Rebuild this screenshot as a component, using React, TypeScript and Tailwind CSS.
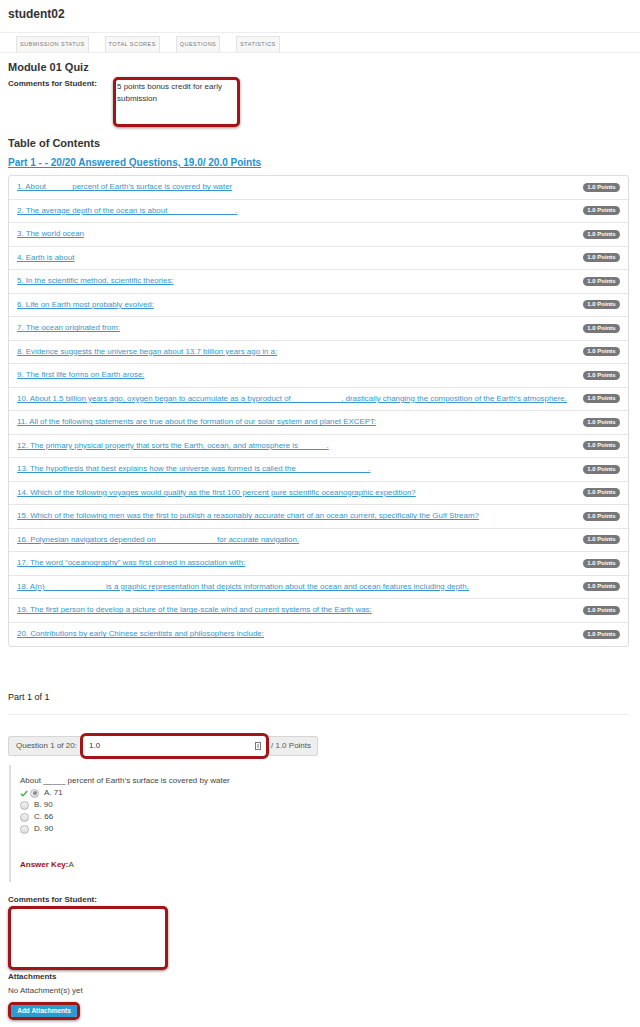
import React from 'react';

const QUESTIONS = [
  '1. About _____ percent of Earth\u2019s surface is covered by water',
  '2. The average depth of the ocean is about _______________.',
  '3. The world ocean',
  '4. Earth is about',
  '5. In the scientific method, scientific theories:',
  '6. Life on Earth most probably evolved:',
  '7. The ocean originated from:',
  '8. Evidence suggests the universe began about 13.7 billion years ago in a:',
  '9. The first life forms on Earth arose:',
  '10. About 1.5 billion years ago, oxygen began to accumulate as a byproduct of ___________, drastically changing the composition of the Earth\u2019s atmosphere.',
  '11. All of the following statements are true about the formation of our solar system and planet EXCEPT:',
  '12. The primary physical property that sorts the Earth, ocean, and atmosphere is ______.',
  '13. The hypothesis that best explains how the universe was formed is called the ________________.',
  '14. Which of the following voyages would qualify as the first 100 percent pure scientific oceanographic expedition?',
  '15. Which of the following men was the first to publish a reasonably accurate chart of an ocean current, specifically the Gulf Stream?',
  '16. Polynesian navigators depended on _____________ for accurate navigation.',
  '17. The word \u201coceanography\u201d was first coined in association with:',
  '18. A(n) _____________ is a graphic representation that depicts information about the ocean and ocean features including depth.',
  '19. The first person to develop a picture of the large-scale wind and current systems of the Earth was:',
  '20. Contributions by early Chinese scientists and philosophers include:',
];

const TABS = ['Submission Status', 'Total Scores', 'Questions', 'Statistics'];

const OPTIONS = ['A. 71', 'B. 90', 'C. 66', 'D. 90'];

function Radio({ checked }: { checked?: boolean }) {
  return (
    <span className="flex h-[9px] w-[9px] items-center justify-center rounded-full border border-[#b5b5b5] bg-gradient-to-b from-[#f4f4f4] to-[#dcdcdc]">
      {checked && <span className="h-[4px] w-[4px] rounded-full bg-[#8a8a8a]" />}
    </span>
  );
}

export default function App() {
  return (
    <div className="w-[640px] bg-white pb-[9px] font-['Liberation_Sans',Arial,sans-serif] text-[#333]">
      {/* header */}
      <div className="h-[32px] pl-2 pt-[6px] text-[12px] font-bold leading-[16px] text-[#333]">student02</div>

      <div className="flex gap-4 border-y border-[#eeeeee] pl-4 pt-[3px]">
        {TABS.map((tab) => (
          <div
            key={tab}
            className="flex h-[16px] items-center border border-b-0 border-[#e3e3e3] bg-[#f7f7f7] px-[3px] text-[5.5px] uppercase tracking-[0.45px] text-[#777]"
          >
            {tab}
          </div>
        ))}
      </div>

      <div className="w-[629px] pl-2">
        <div className="mt-[7px] text-[11px] font-bold leading-[14px]">Module 01 Quiz</div>

        <div className="mt-[3px] flex">
          <div className="w-[105px] pt-[2px] text-[8px] font-bold leading-[10px]">Comments for Student:</div>
          <div className="h-[50px] w-[127px] rounded-[5px] border-[3px] border-[#a31419] bg-white px-[1px] pt-[1px] text-[8px] leading-[12px] text-[#333] shadow-[0_1px_3px_rgba(0,0,0,0.45)]">
            5 points bonus credit for early submission
          </div>
        </div>

        <div className="mt-[9px] text-[11px] font-bold leading-[14px]">Table of Contents</div>
        <div className="mt-[7px] text-[10px] font-bold leading-[12px] text-[#1c94d2] underline">
          Part 1 - - 20/20 Answered Questions, 19.0/ 20.0 Points
        </div>

        <div className="mt-[6px] rounded-[3px] border border-[#dddddd]">
          {QUESTIONS.map((q, i) => (
            <div
              key={q}
              className={`flex h-[23.5px] items-center justify-between pl-[8px] pr-[8px] ${
                i < QUESTIONS.length - 1 ? 'border-b border-[#e6e6e6]' : ''
              }`}
            >
              <span className="text-[7.9px] leading-[10px] text-[#3597cb] underline">{q}</span>
              <span className="flex h-[9px] w-[37px] shrink-0 items-center justify-center rounded-full bg-[#777] text-[6px] font-bold text-white">
                1.0 Points
              </span>
            </div>
          ))}
        </div>

        <div className="mt-[44px] text-[9px] leading-[12px] text-[#222]">Part 1 of 1</div>
        <div className="mt-[11px] border-t border-[#eeeeee]" />

        {/* score bar */}
        <div className="mt-[21px] flex h-[20px] text-[8px] text-[#555]">
          <div className="flex w-[75px] items-center rounded-l-[3px] border border-r-0 border-[#d6d6d6] bg-[#eeeeee] pl-[7px]">
            Question 1 of 20:
          </div>
          <div className="relative flex w-[183px] items-center justify-between rounded-[3px] bg-white pl-[6px] pr-[5px] text-[#333] shadow-[0_1px_3px_rgba(0,0,0,0.45)] outline outline-[3px] outline-[#a31419]">
            <span>1.0</span>
            <svg width="6" height="8" viewBox="0 0 6 8">
              <rect x="0.5" y="0.5" width="5" height="7" fill="none" stroke="#777" />
              <line x1="3" y1="2" x2="3" y2="6" stroke="#777" />
            </svg>
          </div>
          <div className="flex w-[52px] items-center rounded-r-[3px] border border-l-0 border-[#d6d6d6] bg-[#eeeeee] pl-[5px]">
            / 1.0 Points
          </div>
        </div>

        {/* question */}
        <div className="mt-[9px] ml-[1px] border-l-2 border-[#dddddd] pb-[11px] pl-[9px] pt-[10px] text-[8px] leading-[12px] text-[#444]">
          <div>About _____ percent of Earth&rsquo;s surface is covered by water</div>
          {OPTIONS.map((o, i) => (
            <div key={o} className="flex items-center">
              {i === 0 && (
                <svg width="8" height="7" viewBox="0 0 8 7" className="mr-[2px]">
                  <path d="M0.8 3.8 L3 5.8 L7.2 1" fill="none" stroke="#3cb34a" strokeWidth="1.4" />
                </svg>
              )}
              <Radio checked={i === 0} />
              <span className="ml-[5px]">{o}</span>
            </div>
          ))}
          <div className="mt-[24px]">
            <span className="font-bold text-[#a00f0f]">Answer Key:</span>A
          </div>
        </div>

        <div className="mt-[13px] text-[8px] font-bold leading-[10px]">Comments for Student:</div>
        <div className="mt-[1px] h-[64px] w-[160px] rounded-[5px] border-[3px] border-[#a31419] bg-white shadow-[0_1px_3px_rgba(0,0,0,0.45)]" />

        <div className="mt-[2px] text-[8px] font-bold leading-[10px]">Attachments</div>
        <div className="mt-[4px] text-[8px] leading-[10px] text-[#444]">No Attachment(s) yet</div>
        <div className="mt-[4px] inline-flex h-[18px] w-[72px] items-center justify-center rounded-[5px] border-[3px] border-[#a31419] shadow-[0_1px_3px_rgba(0,0,0,0.45)]">
          <div className="flex h-full w-full items-center justify-center rounded-[2px] bg-[#2d9bd2] text-[6.5px] font-bold text-white">
            Add Attachments
          </div>
        </div>
      </div>
    </div>
  );
}
